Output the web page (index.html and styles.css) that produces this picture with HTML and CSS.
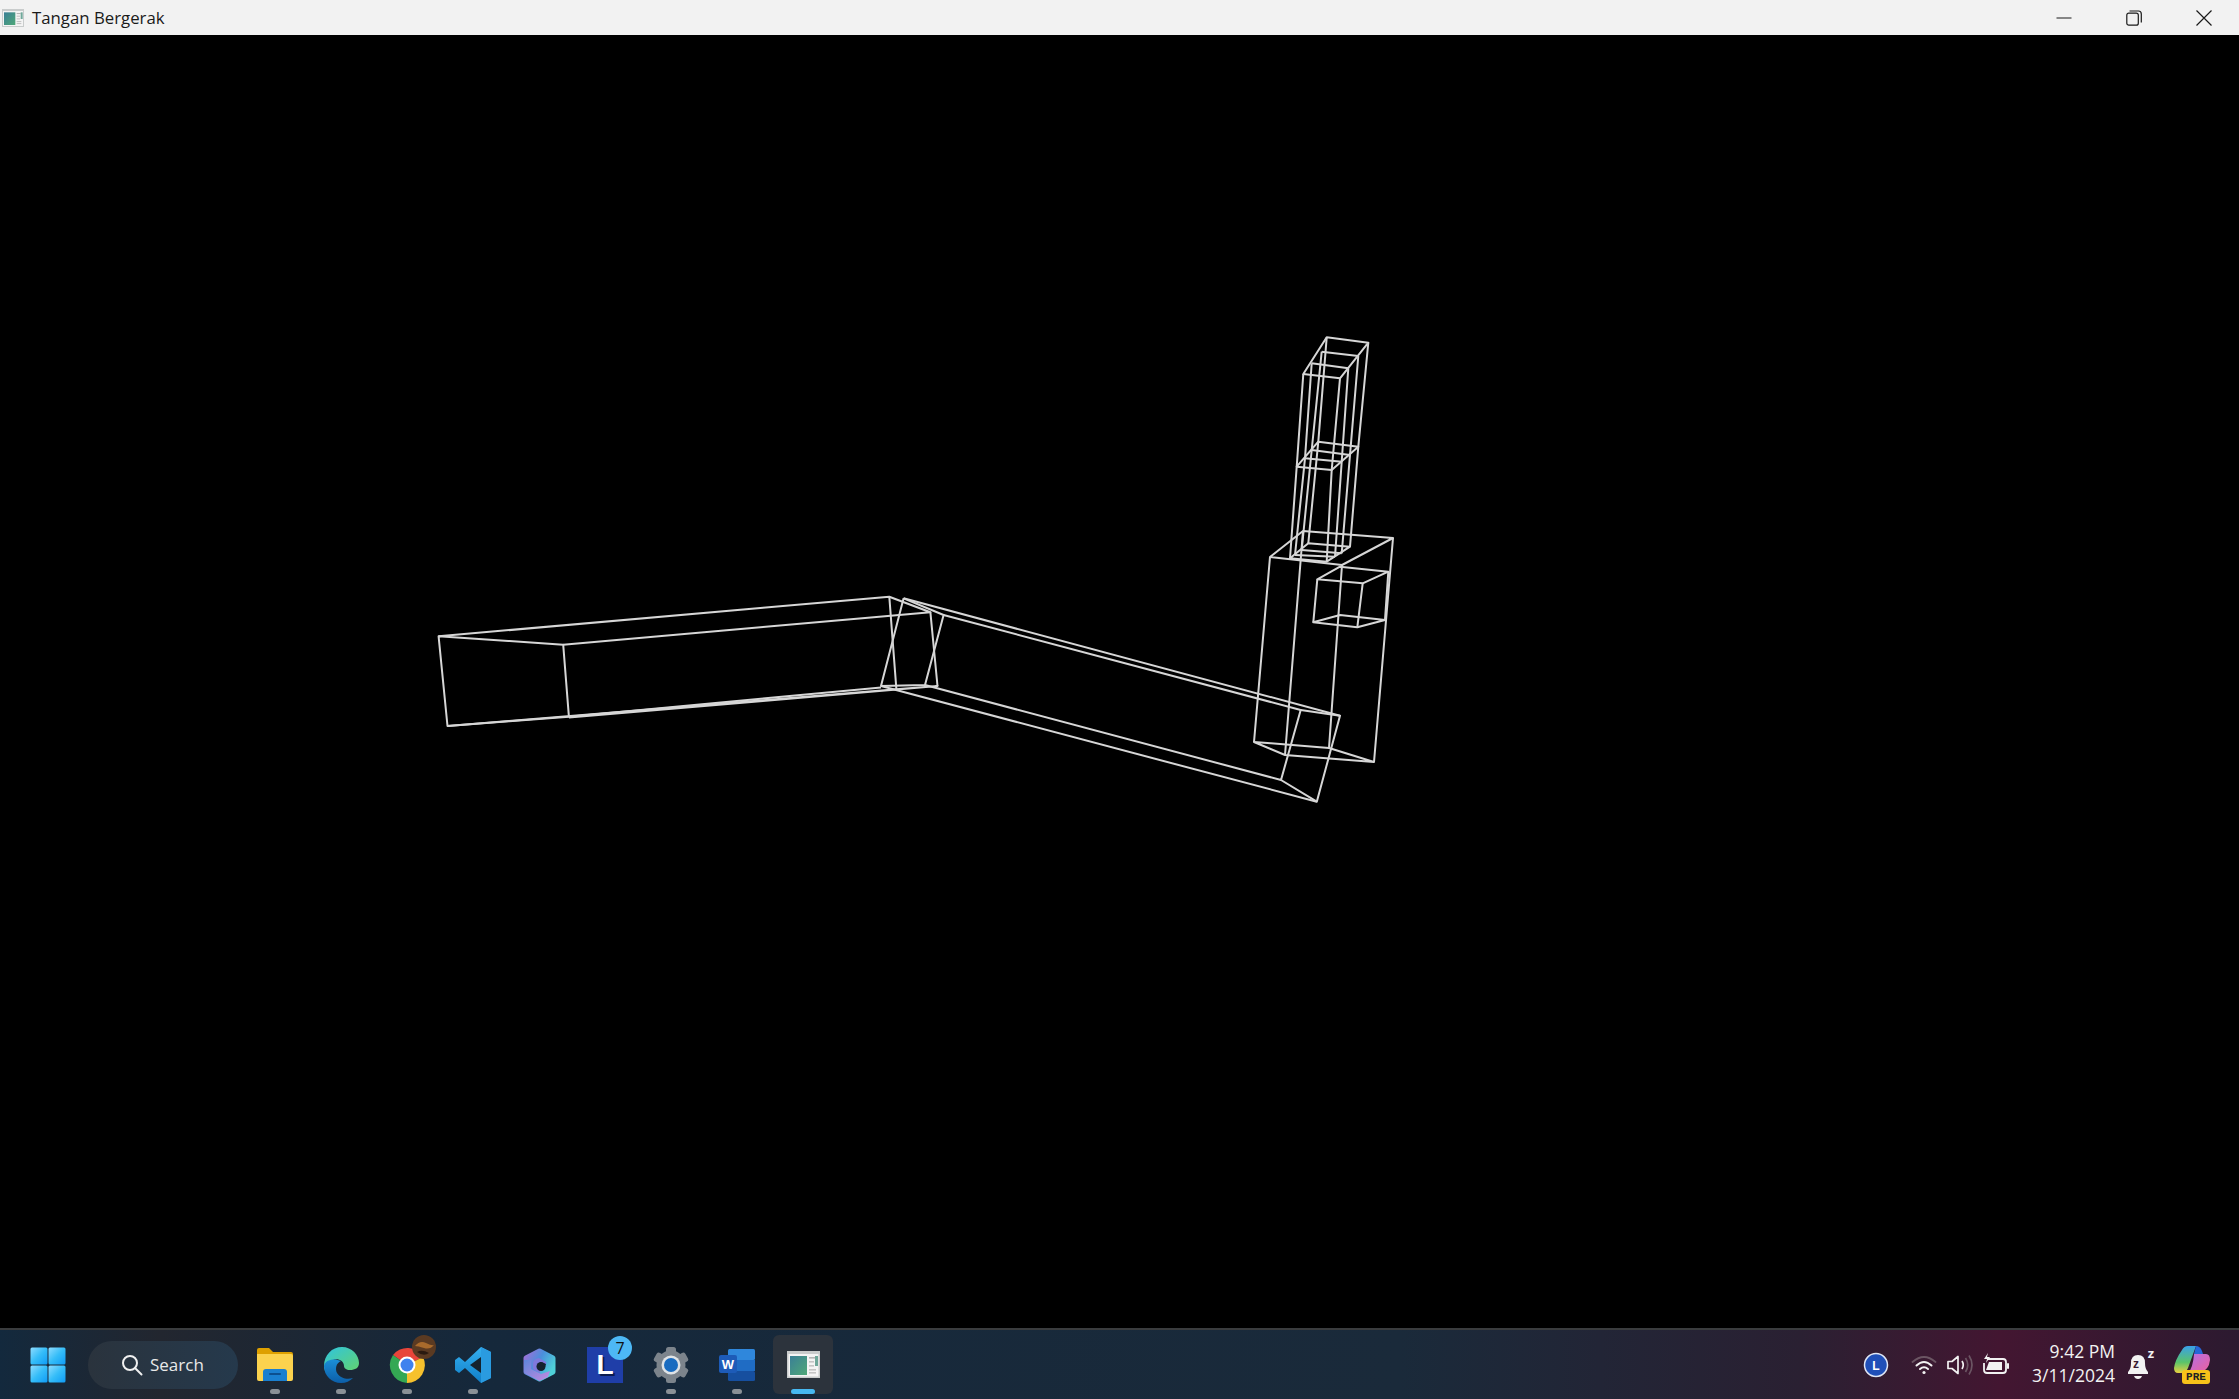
FILE: index.html
```html
<!DOCTYPE html>
<html>
  <head>
    <meta charset='utf-8'>
    <title>Tangan Bergerak</title>
    <link rel="stylesheet" href="styles.css">
  </head>
  <body>
    <svg class='defs' width='0' height='0'>
      <defs>
        <linearGradient id='app_panel' x1='0' y1='0' x2='1' y2='1'>
          <stop offset='0' stop-color='#3a7f96'/>
          <stop offset='1' stop-color='#4fa878'/>
        </linearGradient>
        <linearGradient id='win_blue' x1='0' y1='0' x2='1' y2='1'>
          <stop offset='0' stop-color='#8fdcff'/>
          <stop offset='0.5' stop-color='#35bdf8'/>
          <stop offset='1' stop-color='#0f9bf5'/>
        </linearGradient>
        <linearGradient id='edge_wave' x1='0' y1='0' x2='1' y2='1'>
          <stop offset='0' stop-color='#2fc4e0'/>
          <stop offset='1' stop-color='#62d36f'/>
        </linearGradient>
        <linearGradient id='edge_body' x1='0' y1='0' x2='0' y2='1'>
          <stop offset='0' stop-color='#1b8fd8'/>
          <stop offset='1' stop-color='#0c5ea8'/>
        </linearGradient>
        <linearGradient id='vs_blue' x1='0' y1='0' x2='0' y2='1'>
          <stop offset='0' stop-color='#35b0f0'/>
          <stop offset='1' stop-color='#0f7ec8'/>
        </linearGradient>
        <linearGradient id='m365_ring' x1='0' y1='0' x2='1' y2='0.6'>
          <stop offset='0' stop-color='#a070d8'/>
          <stop offset='0.5' stop-color='#4a8fdc'/>
          <stop offset='1' stop-color='#4fd0d8'/>
        </linearGradient>
        <linearGradient id='m365_low' x1='0' y1='0' x2='1' y2='1'>
          <stop offset='0' stop-color='#5f86dc'/>
          <stop offset='1' stop-color='#c58ae0'/>
        </linearGradient>
        <linearGradient id='copilot_a' x1='0' y1='0' x2='0' y2='1'>
          <stop offset='0' stop-color='#3aa0e8'/>
          <stop offset='0.6' stop-color='#5ac46a'/>
          <stop offset='1' stop-color='#e8d040'/>
        </linearGradient>
        <linearGradient id='copilot_b' x1='0' y1='0' x2='1' y2='1'>
          <stop offset='0' stop-color='#b070e8'/>
          <stop offset='1' stop-color='#f0609a'/>
        </linearGradient>
        <symbol id='app_icon' viewBox='0 0 33 27'>
          <rect x='0' y='0' width='33' height='27' fill='#c9cccc'/>
          <rect x='1.5' y='3' width='30' height='22.5' fill='#f4f4f4'/>
          <rect x='3' y='5' width='17' height='19' fill='url(#app_panel)'/>
          <rect x='22' y='6' width='6' height='1.6' fill='#b5b5b5'/>
          <rect x='28' y='5' width='3' height='10' fill='#6fa89a'/>
          <rect x='22' y='10' width='5' height='1.6' fill='#c5c5c5'/>
          <rect x='22' y='14' width='5' height='1.6' fill='#c5c5c5'/>
          <rect x='22' y='18' width='7' height='1.6' fill='#c5c5c5'/>
          <rect x='22' y='21' width='7' height='1.6' fill='#c5c5c5'/>
        </symbol>
      </defs>
    </svg>

    <div class='titlebar'>
      <svg class='title_icon'><use href='#app_icon'/></svg>
      <span class='title_text'>Tangan Bergerak</span>
      <div class='window_controls'>
        <div class='control'>
          <svg width='16' height='16' viewBox='0 0 16 16'><path d='M0.5 8H15.5' stroke='#1a1a1a' stroke-width='1'/></svg>
        </div>
        <div class='control'>
          <svg width='16' height='16' viewBox='0 0 16 16' fill='none' stroke='#1a1a1a' stroke-width='1.2'><rect x='0.8' y='3.2' width='11.5' height='12' rx='2'/><path d='M3.5 1H12.5Q15.3 1 15.3 4V12.5'/></svg>
        </div>
        <div class='control'>
          <svg width='16' height='16' viewBox='0 0 16 16'><path d='M0.5 0.5L15.5 15.5M15.5 0.5L0.5 15.5' stroke='#1a1a1a' stroke-width='1.2'/></svg>
        </div>
      </div>
    </div>

    <div class='canvas'>
      <!-- wireframe arm, coordinates are in window pixels -->
      <svg class='wireframe' viewBox='0 35 2239 1293' fill='none' stroke='#d6d6d6' stroke-width='2' stroke-linejoin='round'>
        <!-- upper arm -->
        <path d='M438.6 636.3L447.5 726L568.9 716.7L563.2 644.7Z'/>
        <path d='M438.6 636.3L889.3 596.7L930.4 612.3L563.2 644.7'/>
        <path d='M447.5 726L896.4 689.3L937.5 686L568.9 717.5'/>
        <path d='M568.9 716.7L881 687.5'/>
        <path d='M889.3 596.7L896.4 689.3M930.4 612.3L937.5 686'/>
        <!-- forearm -->
        <path d='M903.6 598.3L881 686L925 685L943.6 615L903.6 598.3'/>
        <path d='M903.6 598.3L1340 715.7L1316.8 801.7L881 686'/>
        <path d='M943.6 615L1300.7 710L1281 780L925 685'/>
        <path d='M1300.7 710L1340 715.7M1281 780L1316.8 801.7'/>
        <!-- palm -->
        <path d='M1270 557L1303 531L1393 538L1342 565Z'/>
        <path d='M1254 742L1285 755L1374 762L1329 748Z'/>
        <path d='M1270 557L1254 742M1303 531L1285 755M1393 538L1374 762M1342 565L1329 748'/>
        <!-- thumb -->
        <path d='M1317.3 579.3L1340 566.7L1388.3 571.7L1362.7 583.3Z'/>
        <path d='M1313.3 622.3L1340 615L1385 620L1357.3 627.3Z'/>
        <path d='M1317.3 579.3L1313.3 622.3M1362.7 583.3L1357.3 627.3M1388.3 571.7L1385 620'/>
        <!-- finger, top -->
        <path d='M1326.7 337.3L1368.3 342.7L1340 378.3L1303.3 374Z'/>
        <path d='M1321.7 351.7L1358.3 356M1311.7 363.3L1348.3 368.3'/>
        <!-- finger, middle -->
        <path d='M1318.3 441.7L1358.3 446.7L1331.7 470L1296.7 466.7Z'/>
        <path d='M1311.7 450L1350 455M1305 458.3L1341.7 461.7'/>
        <!-- finger, bottom -->
        <path d='M1308.3 543.3L1350 546.7L1326.7 561.7L1290 558.3Z'/>
        <path d='M1301.7 550L1341.7 553.3M1295 555L1335 556.7'/>
        <!-- finger, long edges -->
        <path d='M1326.7 337.3L1318.3 441.7L1308.3 543.3M1368.3 342.7L1358.3 446.7L1350 546.7'/>
        <path d='M1340 378.3L1331.7 470L1326.7 561.7M1303.3 374L1296.7 466.7L1290 558.3'/>
        <path d='M1321.7 351.7L1311.7 450L1301.7 550M1358.3 356L1350 455L1341.7 553.3'/>
        <path d='M1348.3 368.3L1341.7 461.7L1335 556.7M1311.7 363.3L1305 458.3L1295 555'/>
      </svg>
    </div>

    <div class='taskbar'>
      <div class='task_left'>
        <div class='tile start'>
          <svg width='36' height='36' viewBox='0 0 36 36' fill='url(#win_blue)'>
            <rect x='0.5' y='0.5' width='17' height='17' rx='1.5'/>
            <rect x='18.5' y='0.5' width='17' height='17' rx='1.5'/>
            <rect x='0.5' y='18.5' width='17' height='17' rx='1.5'/>
            <rect x='18.5' y='18.5' width='17' height='17' rx='1.5'/>
          </svg>
        </div>
        <div class='search'>
          <svg width='22' height='22' viewBox='0 0 22 22' fill='none' stroke='#f0f0f0' stroke-width='2'><circle cx='9' cy='9' r='7'/><path d='M14 14L20.5 20.5' stroke-linecap='round'/></svg>
          <span>Search</span>
        </div>
        <div class='apps'>
          <div class='tile running'>
            <svg width='36' height='34' viewBox='0 0 36 34'>
              <path d='M0 2Q0 0 2 0H12L16 4H34Q36 4 36 6V12H0Z' fill='#dea000'/>
              <path d='M0 6H34Q36 6 36 8V31Q36 33 34 33H2Q0 33 0 31Z' fill='#fbd24e'/>
              <path d='M6 33V24Q6 21 9 21H27Q30 21 30 24V33Z' fill='#1a7fd0'/>
              <rect x='12' y='25' width='12' height='2' rx='1' fill='#0c4f8f'/>
            </svg>
          </div>
          <div class='tile running'>
            <svg width='36' height='36' viewBox='0 0 36 36'>
              <path d='M1 19C1 8 9 0 19 0C29 0 36 8 36 16C36 21 32 23 27 23C23 23 21 21 21 19C21 14 15 11 10 13C5 15 2 19 1 24Z' fill='url(#edge_wave)'/>
              <path d='M1 19C1 29 9 36 18 36C23 36 27 34 30 31C24 33 17 31 14 26C12 22 13 16 18 14C12 11 2 12 1 19Z' fill='url(#edge_body)'/>
            </svg>
          </div>
          <div class='tile running chrome'>
            <svg width='36' height='36' viewBox='0 0 36 36'>
              <path d='M18 18L4 8A18 18 0 0 1 34 10Z' fill='#e8453a'/>
              <path d='M18 18L34 10A18 18 0 0 1 18 36Z' fill='#f6c12d'/>
              <path d='M18 18L18 36A18 18 0 0 1 4 8Z' fill='#34a853'/>
              <circle cx='18' cy='18' r='8.5' fill='#fff'/>
              <circle cx='18' cy='18' r='6.5' fill='#3f82ee'/>
            </svg>
            <svg class='avatar' width='24' height='24' viewBox='0 0 24 24'>
              <circle cx='12' cy='12' r='12' fill='#5a3a22'/>
              <path d='M3 11Q8 5 14 8T22 10Q18 15 12 13T3 11Z' fill='#a86a2c'/>
              <path d='M5 17Q10 14 17 18Q12 22 5 17Z' fill='#2a1a10'/>
            </svg>
          </div>
          <div class='tile running'>
            <svg width='36' height='36' viewBox='0 0 36 36'>
              <path d='M26 0L36 5V31L26 36L10 21L4 26L0 23V13L4 10L10 15Z' fill='url(#vs_blue)'/>
              <path d='M26 10L15 18L26 26Z' fill='#15222e'/>
              <path d='M26 0L36 5V31L26 36Z' fill='#2a9be0'/>
            </svg>
          </div>
          <div class='tile'>
            <svg width='33' height='34' viewBox='0 0 33 34'>
              <path d='M16.5 3L30 10V24L16.5 31L3 24V10Z' fill='url(#m365_ring)' stroke='url(#m365_ring)' stroke-width='5' stroke-linejoin='round'/>
              <path d='M1 12L8 12V21L18 26L27 23L25 29L16.5 33L3 26Q1 25 1 23Z' fill='url(#m365_low)'/>
              <path d='M10 16Q10 11 16 10L23 14Q24 16 22 17L17 14V25L11 22Q10 21 10 20Z' fill='#7f78dc'/>
              <circle cx='18' cy='18.5' r='4.5' fill='#15222e'/>
              <path d='M17 14L23 16L22 19L17 17Z' fill='#15222e'/>
            </svg>
          </div>
          <div class='tile lingo'>
            <div class='lingo_square'><span>L</span></div>
            <div class='badge'>7</div>
          </div>
          <div class='tile running'>
            <svg width='36' height='36' viewBox='0 0 36 36'>
              <g fill='#7c848c' transform='translate(18 18)'>
                <circle r='14.5'/>
                <rect x='-5' y='-18' width='10' height='36' rx='2.5'/>
                <rect x='-5' y='-18' width='10' height='36' rx='2.5' transform='rotate(60)'/>
                <rect x='-5' y='-18' width='10' height='36' rx='2.5' transform='rotate(120)'/>
                <circle r='9.5' fill='#dfe3e6'/>
                <circle r='7' fill='#1a6cc0'/>
              </g>
            </svg>
          </div>
          <div class='tile running'>
            <svg width='36' height='32' viewBox='0 0 36 32'>
              <rect x='9' y='0' width='27' height='11' rx='1.5' fill='#2f87dc'/>
              <rect x='9' y='11' width='27' height='11' fill='#1f6cc4'/>
              <rect x='9' y='22' width='27' height='10' rx='1.5' fill='#164f9f'/>
              <rect x='0' y='6' width='18' height='18' rx='2' fill='#1d5bb8'/>
              <text x='9' y='20' class='word_w'>W</text>
            </svg>
          </div>
          <div class='tile active'>
            <svg class='active_icon'><use href='#app_icon'/></svg>
            <div class='active_bar'></div>
          </div>
        </div>
      </div>

      <div class='tray'>
        <div class='tray_item'>
          <svg width='26' height='26' viewBox='0 0 26 26'>
            <circle cx='13' cy='13' r='11.5' fill='#1f4fb8' stroke='#dfe6f5' stroke-width='1.5'/>
            <text x='13' y='17.5' class='tray_l'>L</text>
          </svg>
        </div>
        <div class='tray_status'>
          <svg width='26' height='20' viewBox='0 0 26 20' fill='none' stroke-linecap='round'>
            <path d='M1.5 7Q13 -3 24.5 7' stroke='#6b5563' stroke-width='1.8'/>
            <path d='M5.5 10.5Q13 3.5 20.5 10.5' stroke='#f2f2f2' stroke-width='2'/>
            <path d='M9 14Q13 10.5 17 14' stroke='#f2f2f2' stroke-width='2'/>
            <circle cx='13' cy='17.5' r='1.6' fill='#f2f2f2'/>
          </svg>
          <svg width='26' height='22' viewBox='0 0 26 22' fill='none' stroke-width='1.7'>
            <path d='M1 7.5H5L11 2.5V19.5L5 14.5H1Z' stroke='#f2f2f2' stroke-linejoin='round'/>
            <path d='M15 7Q17.5 11 15 15' stroke='#f2f2f2'/>
            <path d='M18.5 4Q23 11 18.5 18M22 1.5Q28 11 22 20.5' stroke='#6b5563'/>
          </svg>
          <svg width='26' height='24' viewBox='0 0 26 24'>
            <path d='M5 6H20Q23 6 23 9V17Q23 20 20 20H4Q1 20 1 17V10' fill='none' stroke='#f2f2f2' stroke-width='1.8'/>
            <path d='M6 9H19V17H3Z' fill='#f2f2f2'/>
            <rect x='24' y='10' width='2' height='6' rx='1' fill='#f2f2f2'/>
            <path d='M5 0L1 6H4L3 10L7 4H4Z' fill='#f2f2f2'/>
          </svg>
        </div>
        <div class='clock'>
          <span>9:42 PM</span>
          <span>3/11/2024</span>
        </div>
        <div class='bell'>
          <svg width='24' height='28' viewBox='0 0 24 28'>
            <path d='M2 21Q5 18 5 12Q5 4 12 4Q19 4 19 12Q19 18 22 21V23H2Z' fill='#f2f2f2'/>
            <path d='M8 25H16Q15 28 12 28Q9 28 8 25Z' fill='#f2f2f2'/>
            <text x='7' y='17' class='bell_z'>z</text>
          </svg>
          <span class='bell_zz'>z</span>
        </div>
        <div class='copilot'>
          <svg width='36' height='30' viewBox='0 0 36 30'>
            <path d='M8 4Q10 0 14 0H22L14 22Q12 27 7 27H4Q0 27 0 22Q1 14 8 4Z' fill='url(#copilot_a)'/>
            <path d='M22 0Q26 0 28 5L29 8H20Z' fill='#2567d8'/>
            <path d='M20 8H32Q36 8 36 14Q35 24 26 27H14Q19 22 20 8Z' fill='url(#copilot_b)'/>
          </svg>
          <span class='pre_tag'>PRE</span>
        </div>
      </div>
    </div>
  </body>
</html>
```

FILE: styles.css
```css
html, body {
  margin: 0;
  height: 100%;
  overflow: hidden;
}

body {
  display: flex;
  flex-direction: column;
  background: #000;
  font-family: 'Open Sans', 'Noto Sans', sans-serif;
}

.defs {
  position: absolute;
}

.titlebar {
  height: 35px;
  display: flex;
  align-items: center;
  background: #f2f2f2;
  flex-shrink: 0;
}

.title_icon {
  width: 22px;
  height: 18px;
  margin-left: 2px;
}

.title_text {
  margin-left: 8px;
  font-size: 16.8px;
  color: #1a1a1a;
}

.window_controls {
  margin-left: auto;
  display: flex;
}

.control {
  width: 70px;
  height: 34px;
  display: flex;
  align-items: center;
  justify-content: center;
}

.canvas {
  flex: 1;
  min-height: 0;
  background: #000;
}

.wireframe {
  display: block;
  width: 100%;
  height: 100%;
  filter: blur(0.35px);
}

.taskbar {
  height: 69px;
  flex-shrink: 0;
  display: flex;
  justify-content: space-between;
  align-items: center;
  border-top: 2px solid #3a3c3e;
  background: linear-gradient(90deg, #13293d 0, #22262f 160px, #15283b 480px, #1a2a3a 1400px, #2a2032 1800px, #431631 2000px, #2c1a30 2239px);
}

.task_left {
  display: flex;
  align-items: center;
  padding-left: 16px;
}

.tile {
  width: 66px;
  height: 59px;
  display: flex;
  align-items: center;
  justify-content: center;
  position: relative;
  box-sizing: border-box;
}

.start svg {
  margin-right: 2px;
}

.search {
  width: 150px;
  height: 48px;
  margin: 0 4px 0 6px;
  border-radius: 24px;
  background: linear-gradient(90deg, #2a333d, #25394c);
  display: flex;
  align-items: center;
  gap: 7px;
  padding-left: 33px;
  box-sizing: border-box;
  color: #e9e9e9;
  font-size: 17px;
}

.apps {
  display: flex;
  align-items: center;
}

.running::after {
  content: '';
  position: absolute;
  left: 28px;
  bottom: 0;
  width: 10px;
  height: 5px;
  border-radius: 3px;
  background: #8a9096;
}

.avatar {
  position: absolute;
  top: 0;
  left: 38px;
}

.lingo_square {
  width: 36px;
  height: 36px;
  background: #1f3ea8;
  display: flex;
  align-items: center;
  justify-content: center;
}

.lingo_square span {
  color: #fff;
  font-family: 'Liberation Sans', sans-serif;
  font-weight: bold;
  font-size: 28px;
  line-height: 1;
  text-shadow: 2px 2px 0 #0c1c50;
}

.badge {
  position: absolute;
  top: 1px;
  left: 36px;
  width: 24px;
  height: 24px;
  border-radius: 50%;
  background: #4db8f5;
  color: #111;
  font-size: 16px;
  line-height: 24px;
  text-align: center;
}

.word_w {
  font-family: 'Liberation Sans', sans-serif;
  font-weight: bold;
  font-size: 13px;
  fill: #fff;
  text-anchor: middle;
}

.active {
  width: 60px;
  margin-left: 3px;
  background: #2c333c;
  border-radius: 6px;
}

.active_icon {
  width: 33px;
  height: 27px;
}

.active_bar {
  position: absolute;
  left: 18px;
  bottom: 0;
  width: 24px;
  height: 5px;
  border-radius: 3px;
  background: #47b8f0;
}

.tray {
  display: flex;
  align-items: center;
  padding-right: 29px;
  color: #f2f2f2;
}

.tray_item {
  display: flex;
  margin-right: 22px;
}

.tray_l {
  font-family: 'Liberation Sans', sans-serif;
  font-weight: bold;
  font-size: 12px;
  fill: #fff;
  text-anchor: middle;
}

.tray_status {
  display: flex;
  align-items: center;
  gap: 10px;
  margin-right: 23px;
}

.clock {
  display: flex;
  flex-direction: column;
  align-items: flex-end;
  font-size: 17.5px;
  line-height: 24px;
  margin-right: 11px;
  padding-bottom: 3px;
}

.bell {
  position: relative;
  width: 24px;
  height: 28px;
  margin-right: 24px;
}

.bell_z {
  font-family: 'Liberation Sans', sans-serif;
  font-weight: bold;
  font-size: 12px;
  fill: #3a1a30;
}

.bell_zz {
  position: absolute;
  top: -7px;
  right: -4px;
  font-size: 13px;
  font-weight: bold;
}

.copilot {
  position: relative;
  width: 36px;
  height: 38px;
}

.pre_tag {
  position: absolute;
  left: 8px;
  bottom: 0;
  width: 28px;
  height: 14px;
  border-radius: 3px;
  background: #f7c21a;
  color: #222;
  font-family: 'Liberation Mono', monospace;
  font-weight: bold;
  font-size: 11px;
  line-height: 14px;
  text-align: center;
}
```
